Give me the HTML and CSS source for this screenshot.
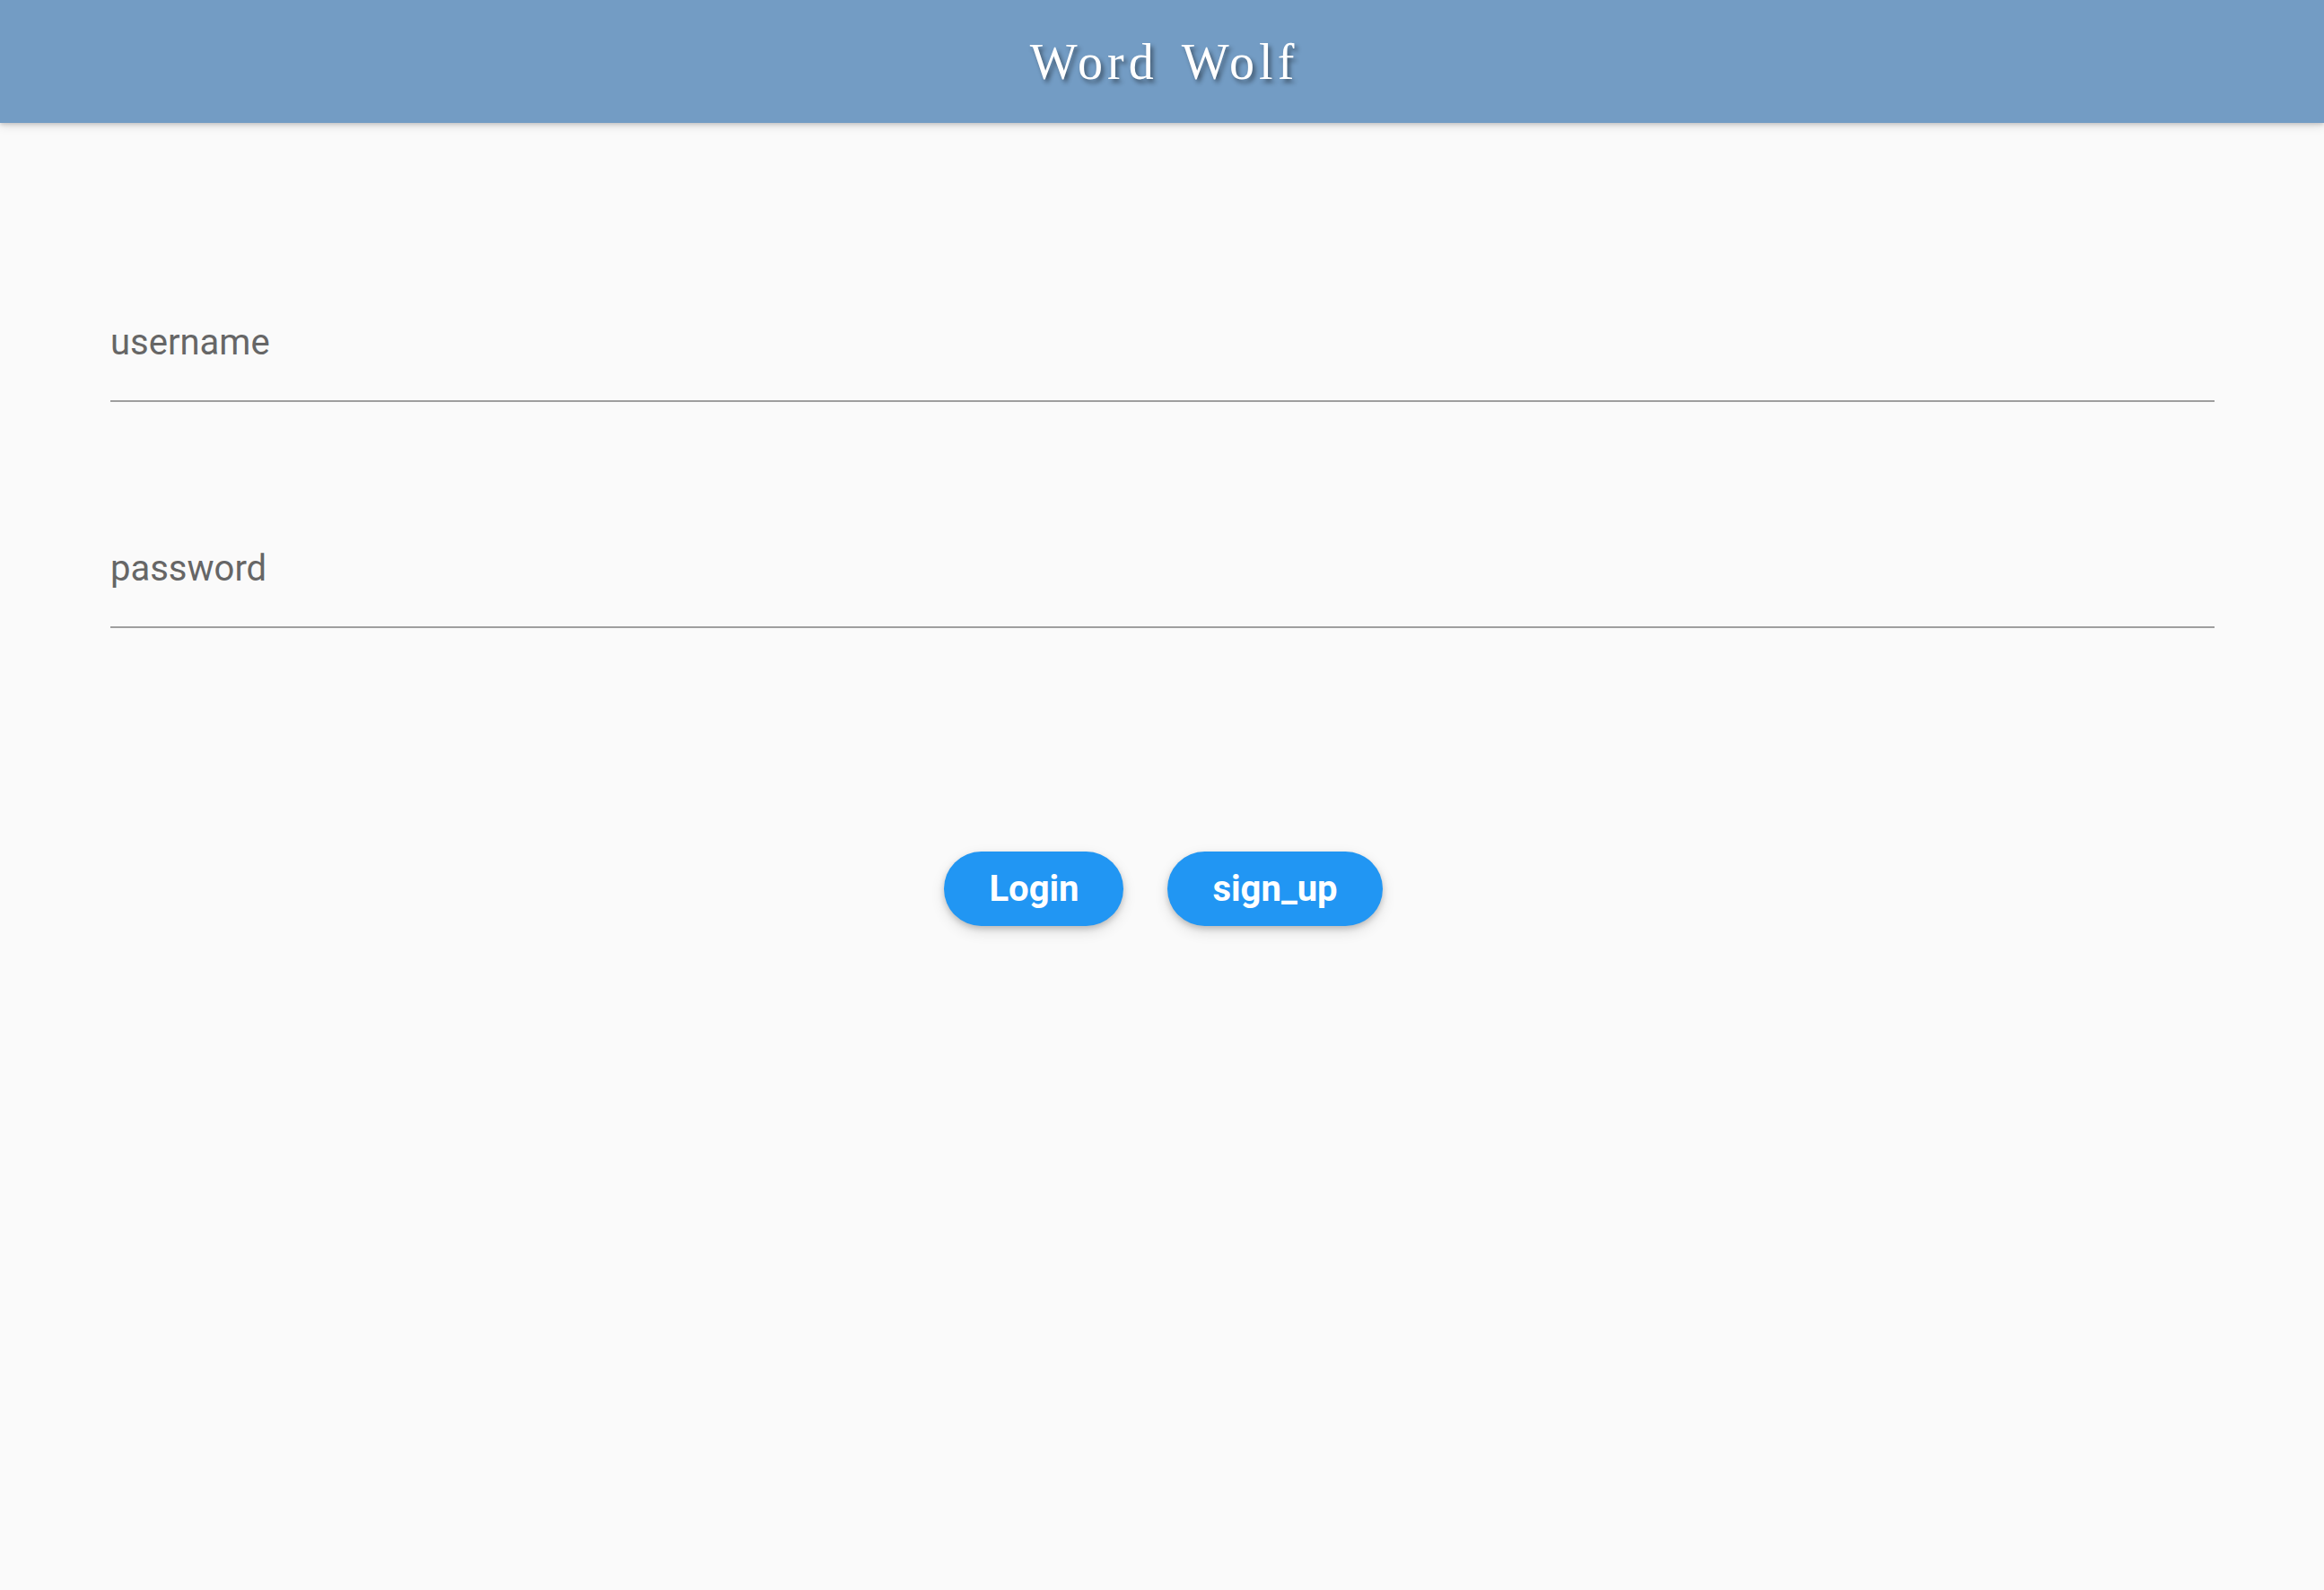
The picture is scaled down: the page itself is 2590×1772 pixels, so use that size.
FILE: index.html
```html
<!DOCTYPE html>
<html>
<head>
<meta charset="utf-8">
<link rel="stylesheet" href="styles.css">
</head>
<body>
<header class="appbar">
  <h1 class="title">Word Wolf</h1>
</header>
<main class="content">
  <div class="field field-first">
    <span class="label">username</span>
  </div>
  <div class="field">
    <span class="label">password</span>
  </div>
  <div class="actions">
    <button class="btn">Login</button>
    <button class="btn">sign_up</button>
  </div>
</main>
</body>
</html>
```

FILE: styles.css
```css
html, body {
  margin: 0;
  padding: 0;
  background: #fafafa;
  height: 100%;
}
body {
  font-family: Roboto, "Liberation Sans", sans-serif;
}
.appbar {
  height: 137px;
  background: #739cc4;
  display: flex;
  align-items: center;
  justify-content: center;
  box-shadow: 0 2px 4px rgba(0,0,0,0.14), 0 4px 10px rgba(0,0,0,0.10);
  position: relative;
  z-index: 1;
}
.title {
  margin: 0;
  font-family: "Liberation Serif", "DejaVu Serif", serif;
  font-weight: normal;
  font-size: 56px;
  letter-spacing: 5px;
  word-spacing: 8px;
  color: #ffffff;
  text-shadow: 3px 4px 5px rgba(0,0,0,0.45);
  line-height: 1;
  padding-left: 5px;
}
.content {
  padding: 0 122px 0 123px;
}
.field {
  margin-top: 162px;
  padding-bottom: 41px;
  border-bottom: 2px solid #9e9e9e;
}
.field-first {
  margin-top: 221px;
}
.label {
  display: block;
  font-size: 40px;
  line-height: 47px;
  color: #666666;
}
.actions {
  margin-top: 249px;
  display: flex;
  justify-content: center;
  gap: 49px;
  padding-left: 2px;
}
.btn {
  height: 83px;
  padding: 0 50px;
  border: none;
  border-radius: 42px;
  background: #2196f3;
  color: #ffffff;
  font-family: Roboto, "Liberation Sans", sans-serif;
  font-weight: 700;
  font-size: 40px;
  box-shadow: 0 3px 6px rgba(0,0,0,0.18), 0 6px 16px rgba(0,0,0,0.12);
}
```
